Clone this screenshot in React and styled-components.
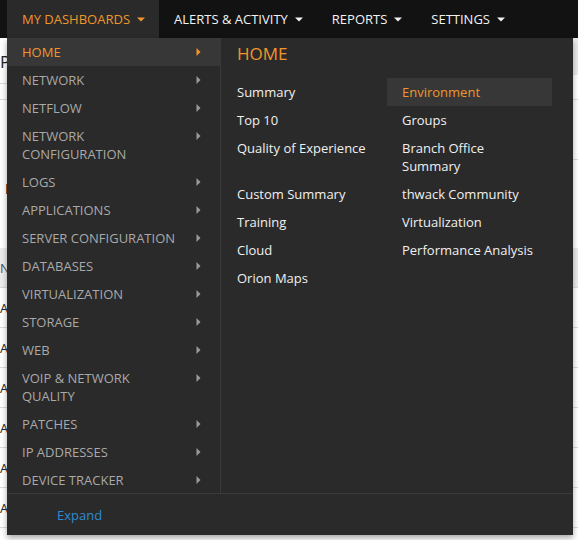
import React from "react";
import styled, { createGlobalStyle } from "styled-components";

const Global = createGlobalStyle`
  html, body { margin: 0; padding: 0; background: #fff; }
  body { font-family: "Open Sans", "Liberation Sans", sans-serif; overflow: hidden; }
  * { box-sizing: border-box; }
`;

const ORANGE = "#f0962c";

const Page = styled.div`
  position: relative;
  width: 578px;
  height: 540px;
  overflow: hidden;
  background: #fff;
`;

const NavBar = styled.div`
  height: 38px;
  background: #121212;
  display: flex;
  padding-left: 7px;
`;

const NavTab = styled.div`
  display: flex;
  align-items: center;
  gap: 7px;
  padding: 0 14px 0 15px;
  font-size: 13px;
  text-transform: uppercase;
  color: ${(p) => (p.$active ? ORANGE : "#f2f2f2")};
  background: ${(p) => (p.$active ? "#2a2a2a" : "transparent")};
  white-space: nowrap;
`;

const Caret = ({ color }) => (
  <svg width="8" height="5" viewBox="0 0 8 5">
    <path d="M0 0.5 L8 0.5 L4 4.5 Z" fill={color} />
  </svg>
);

const Arrow = ({ color }) => (
  <svg width="5" height="8" viewBox="0 0 5 8">
    <path d="M0.5 0 L4.5 4 L0.5 8 Z" fill={color} />
  </svg>
);

/* background page */
const Content = styled.div`
  display: grid;
  grid-template-columns: 7px 1fr 6px;
`;

const LeftWidget = styled.div`
  display: flex;
  flex-direction: column;
  overflow: hidden;
  white-space: nowrap;
`;

const RightWidget = styled.div`
  display: flex;
  flex-direction: column;
`;

const WidgetTitle = styled.div`
  height: 46px;
  display: flex;
  align-items: center;
  padding-top: 2px;
  font-size: 17px;
  color: #222;
  border-bottom: 1px solid #ddd;
`;

const Band = styled.div`
  height: ${(p) => p.$h}px;
  border-bottom: ${(p) => (p.$line ? "1px solid #ddd" : "none")};
  background: ${(p) => p.$bg || "transparent"};
`;

const SubHeading = styled.div`
  height: 148px;
  padding: 78px 0 0 5px;
  font-size: 15px;
  font-weight: 700;
  color: #111;
`;

const TableHead = styled.div`
  height: 40px;
  display: flex;
  align-items: center;
  background: #ececec;
  border-bottom: 1px solid #d8d8d8;
  font-size: 13px;
  color: #555;
`;

const TableRow = styled.div`
  height: 40px;
  display: flex;
  align-items: center;
  border-bottom: 1px solid #ddd;
  font-size: 13px;
  color: #222;
`;

/* dropdown */
const Dropdown = styled.div`
  position: absolute;
  top: 38px;
  left: 7px;
  width: 566px;
  height: 497px;
  background: #2a2a2a;
  box-shadow: 0 3px 6px rgba(0, 0, 0, 0.35);
  display: flex;
  flex-direction: column;
`;

const Body = styled.div`
  display: flex;
  height: 456px;
  border-bottom: 1px solid #3a3a3a;
`;

const SideList = styled.div`
  width: 214px;
  border-right: 1px solid #3a3a3a;
  display: flex;
  flex-direction: column;
`;

const SideItem = styled.div`
  display: flex;
  align-items: flex-start;
  padding: 5px 19px 5px 15px;
  line-height: 18px;
  font-size: 13px;
  text-transform: uppercase;
  color: ${(p) => (p.$active ? ORANGE : "#a9a9a9")};
  background: ${(p) => (p.$active ? "#373737" : "transparent")};
`;

const SideLabel = styled.span`
  flex: 1;
  padding-right: 14px;
`;

const ArrowBox = styled.span`
  display: flex;
  align-items: center;
  height: 18px;
`;

const Panel = styled.div`
  flex: 1;
  display: flex;
  flex-direction: column;
`;

const PanelTitle = styled.div`
  padding: 4px 16px 13px 16px;
  font-size: 17px;
  line-height: 23px;
  color: ${ORANGE};
  text-transform: uppercase;
`;

const LinkGrid = styled.div`
  display: grid;
  grid-template-columns: 165px 165px;
  margin-left: 1px;
`;

const LinkItem = styled.div`
  padding: 5px 12px 5px 15px;
  font-size: 13px;
  line-height: 18px;
  color: ${(p) => (p.$active ? ORANGE : "#f0f0f0")};
  background: ${(p) => (p.$active ? "#373737" : "transparent")};
`;

const Footer = styled.div`
  flex: 1;
  display: flex;
  align-items: center;
  padding-left: 50px;
  font-size: 13px;
  color: #2e8bd0;
`;

const navTabs = [
  { label: "My Dashboards", active: true },
  { label: "Alerts & Activity" },
  { label: "Reports" },
  { label: "Settings" },
];

const sideItems = [
  "Home",
  "Network",
  "NetFlow",
  "Network Configuration",
  "Logs",
  "Applications",
  "Server Configuration",
  "Databases",
  "Virtualization",
  "Storage",
  "Web",
  "VoIP & Network Quality",
  "Patches",
  "IP Addresses",
  "Device Tracker",
];

const links = [
  "Summary",
  "Environment",
  "Top 10",
  "Groups",
  "Quality of Experience",
  "Branch Office Summary",
  "Custom Summary",
  "thwack Community",
  "Training",
  "Virtualization",
  "Cloud",
  "Performance Analysis",
  "Orion Maps",
];

export default function App() {
  return (
    <Page>
      <Global />
      <NavBar>
        {navTabs.map((t) => (
          <NavTab key={t.label} $active={t.active}>
            {t.label}
            <Caret color={t.active ? ORANGE : "#f2f2f2"} />
          </NavTab>
        ))}
      </NavBar>

      <Content>
        <LeftWidget>
          <WidgetTitle>Po</WidgetTitle>
          <Band $h={16} $line />
          <SubHeading>I</SubHeading>
          <TableHead>N</TableHead>
          {[0, 1, 2, 3, 4, 5].map((i) => (
            <TableRow key={i}>A</TableRow>
          ))}
        </LeftWidget>
        <div />
        <RightWidget>
          <Band $h={37} $bg="#ebebeb" />
          <Band $h={25} $line />
          <Band $h={60} $line />
          <Band $h={88} />
          <Band $h={40} $bg="#ececec" $line />
          {[0, 1, 2, 3, 4, 5, 6].map((i) => (
            <Band key={i} $h={40} $line />
          ))}
        </RightWidget>
      </Content>

      <Dropdown>
        <Body>
          <SideList>
            {sideItems.map((s, i) => (
              <SideItem key={s} $active={i === 0}>
                <SideLabel>{s}</SideLabel>
                <ArrowBox>
                  <Arrow color={i === 0 ? ORANGE : "#9a9a9a"} />
                </ArrowBox>
              </SideItem>
            ))}
          </SideList>
          <Panel>
            <PanelTitle>Home</PanelTitle>
            <LinkGrid>
              {links.map((l) => (
                <LinkItem key={l} $active={l === "Environment"}>
                  {l}
                </LinkItem>
              ))}
            </LinkGrid>
          </Panel>
        </Body>
        <Footer>Expand</Footer>
      </Dropdown>
    </Page>
  );
}
